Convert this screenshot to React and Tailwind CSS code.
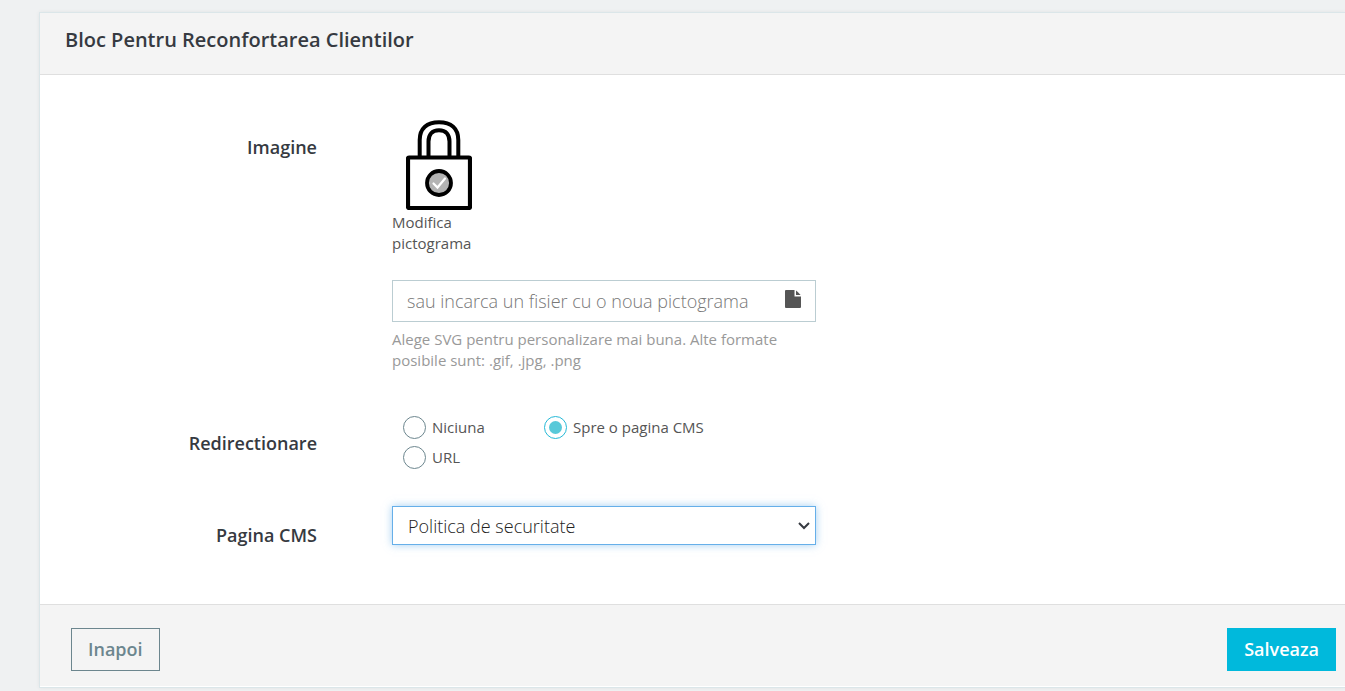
import { useState } from 'react'

const redirectOptions = [
  { value: 'none', label: 'Niciuna' },
  { value: 'cms', label: 'Spre o pagina CMS' },
  { value: 'url', label: 'URL' },
]

function LockIcon() {
  return (
    <svg width="66" height="90" viewBox="0 0 66 90" fill="none" aria-hidden="true">
      <path d="M13.700 36V20C13.700 8.500 21 2.200 33 2.200s19.300 6.300 19.300 17.800v16" stroke="#000" strokeWidth="4" />
      <path d="M22.500 36V21.500c0-7 3.500-11.300 10.500-11.300s10.500 4.300 10.500 11.300V36" stroke="#000" strokeWidth="4" />
      <rect x="2" y="37.500" width="62" height="50.500" rx="1" fill="#fff" stroke="#000" strokeWidth="4.200" />
      <circle cx="33" cy="63" r="12" fill="#b3b3b3" stroke="#000" strokeWidth="3.800" />
      <path d="M27.500 63.500l4 4 7.500-9" stroke="#fff" strokeWidth="2.200" strokeLinecap="round" />
    </svg>
  )
}

function FileIcon() {
  return (
    <svg width="16" height="18" viewBox="0 0 16 18" fill="#555" aria-hidden="true">
      <path d="M1 0h8.500v6.500H16V17a1 1 0 0 1-1 1H1a1 1 0 0 1-1-1V1a1 1 0 0 1 1-1z" />
      <path d="M11 0.500c.5.200 4 3.700 4.500 4.500H11z" />
    </svg>
  )
}

function ChevronIcon() {
  return (
    <svg
      width="12"
      height="8"
      viewBox="0 0 12 8"
      fill="none"
      className="pointer-events-none absolute top-4 right-[6px]"
      aria-hidden="true"
    >
      <path d="M1 1l5 5 5-5" stroke="#363a41" strokeWidth="2" />
    </svg>
  )
}

function FormRow({ label, htmlFor, id, className = '', labelClassName, children }) {
  return (
    <div className={`flex ${className}`}>
      <div className={`w-[277px] shrink-0 text-right text-lg leading-6 font-semibold text-[#363a41] ${labelClassName}`}>
        {htmlFor ? <label htmlFor={htmlFor}>{label}</label> : <span id={id}>{label}</span>}
      </div>
      <div className="ml-[75px] w-[424px]">{children}</div>
    </div>
  )
}

function App() {
  const [redirect, setRedirect] = useState('cms')

  return (
    <main className="min-h-screen overflow-hidden bg-[#eff1f2] pt-3 pl-[39px] font-['Open_Sans',sans-serif]">
      <form
        className="border border-r-0 border-[#dbe6e9] bg-white pb-px shadow-[0_0_4px_0_rgba(0,0,0,0.06)]"
        onSubmit={(e) => e.preventDefault()}
      >
        <header className="border-b border-[#dfdfdf] bg-[#f4f4f4] px-[25px] pt-[13px] pb-5">
          <h1 className="text-xl leading-7 font-semibold text-[#363a41]">Bloc Pentru Reconfortarea Clientilor</h1>
        </header>

        <div className="pt-[45px] pb-[57px]">
          <FormRow label="Imagine" htmlFor="pictogram" labelClassName="pt-[15px]">
            <button type="button" className="flex w-24 flex-col text-left text-[15px] leading-[21px] text-[#555]">
              <span className="ml-[14px]">
                <LockIcon />
              </span>
              <span className="mt-[2px]">Modifica pictograma</span>
            </button>
            <div className="mt-[26px] flex h-[42px] items-center border border-[#bbcdd2] bg-white px-[14px]">
              <input
                id="pictogram"
                type="text"
                placeholder="sau incarca un fisier cu o noua pictograma"
                className="min-w-0 flex-1 text-lg leading-6 font-light text-[#555] outline-none placeholder:text-[#777]"
              />
              <span className="pb-1">
                <FileIcon />
              </span>
            </div>
            <p className="mt-[7px] text-[15px] leading-[21px] text-[#999]">
              Alege SVG pentru personalizare mai buna. Alte formate posibile sunt: .gif, .jpg, .png
            </p>
          </FormRow>

          <FormRow label="Redirectionare" id="redirect-label" className="mt-[41px]" labelClassName="pt-[19px]">
            <div
              role="radiogroup"
              aria-labelledby="redirect-label"
              className="grid grid-cols-[141px_1fr] gap-y-[6px] pt-[3px] pl-[11px]"
            >
              {redirectOptions.map((option) => (
                <label key={option.value} className="flex h-6 items-center gap-[6px] text-[15px] leading-[21px] text-[#555]">
                  <input
                    type="radio"
                    name="redirect"
                    value={option.value}
                    checked={redirect === option.value}
                    onChange={() => setRedirect(option.value)}
                    className="grid size-[23px] appearance-none place-items-center rounded-full border border-[#6c868e] bg-white before:size-[13px] before:rounded-full checked:border-[#25b9d7] checked:before:bg-[#58c9d9]"
                  />
                  {option.label}
                </label>
              ))}
            </div>
          </FormRow>

          <FormRow label="Pagina CMS" htmlFor="cms-page" className="mt-[37px]" labelClassName="pt-[17px]">
            <div className="relative">
              <select
                id="cms-page"
                className="block h-[39px] w-full appearance-none border border-[#66afe9] bg-white pl-[15px] text-lg font-light text-[#222] shadow-[0_0_8px_rgba(102,175,233,0.6)] outline-none"
              >
                <option>Politica de securitate</option>
              </select>
              <ChevronIcon />
            </div>
          </FormRow>
        </div>

        <footer className="flex items-center justify-between border-t border-[#dfdfdf] bg-[#f4f4f4] pt-[23px] pr-[9px] pb-[15px] pl-[31px]">
          <button type="button" className="h-[43px] border border-[#6c868e] px-4 pb-px text-lg font-semibold text-[#6c868e]">
            Inapoi
          </button>
          <button type="submit" className="h-[43px] bg-[#00b9dc] px-[17px] pb-px text-lg font-semibold text-white">
            Salveaza
          </button>
        </footer>
      </form>
    </main>
  )
}

export default App
